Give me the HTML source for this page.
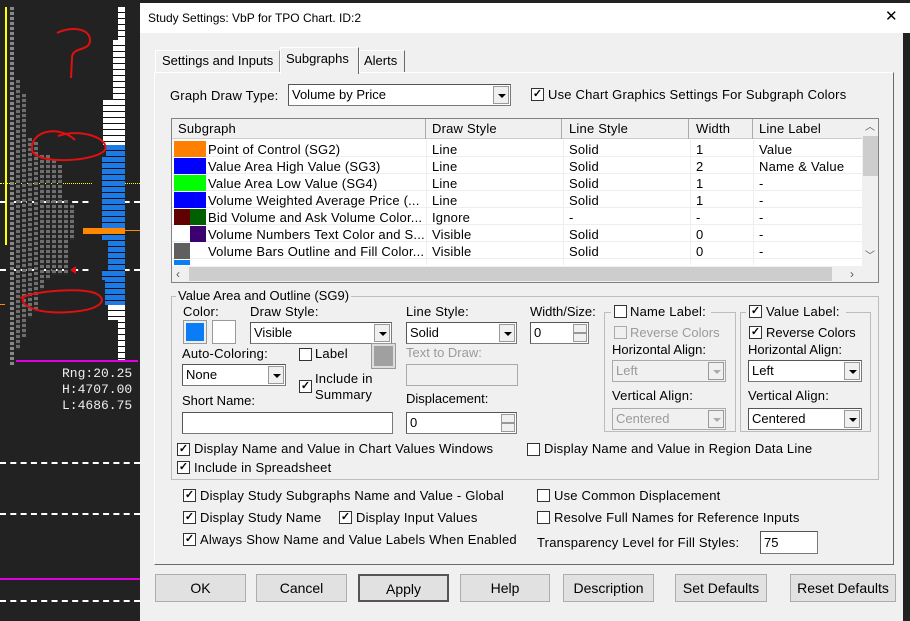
<!DOCTYPE html>
<html><head><meta charset="utf-8"><style>
*{margin:0;padding:0;box-sizing:border-box}
body{width:910px;height:621px;overflow:hidden;background:#222;font-family:"Liberation Sans",Arial,sans-serif;font-size:13px;color:#000;position:relative}
.a{position:absolute}
.t{position:absolute;line-height:16px;white-space:nowrap;font-size:13px;letter-spacing:0.2px}
.dis{color:#9a9a9a}
.cb{position:absolute;width:13px;height:13px;background:#fff;border:1px solid #333;font-size:11px;line-height:11px;text-align:center;font-weight:bold}
.cb.d{border-color:#aaa;background:#f0f0f0}
.sel{position:absolute;background:#fff;border:1px solid #7a7a7a;border-top-color:#555;border-left-color:#555;height:22px;line-height:20px;padding-left:3px;font-size:13px}
.sel .ar{position:absolute;right:1px;top:1px;width:16px;height:18px;background:#f0f0f0;border:1px solid #999}
.sel .ar:after{content:"";position:absolute;left:4px;top:7px;border-left:4px solid transparent;border-right:4px solid transparent;border-top:4px solid #000}
.sel.d{background:#f0f0f0;color:#9a9a9a;border-color:#aaa}
.sel.d .ar:after{border-top-color:#aaa}
.box{position:absolute;background:#fff;border:1px solid #7a7a7a;border-top-color:#555;border-left-color:#555}
.btn{position:absolute;top:574px;height:28px;background:#e1e1e1;border:1px solid #adadad;text-align:center;line-height:26px;font-size:14px}
.grp{position:absolute;border:1px solid #bdbdbd}
.spin{position:absolute;right:1px;width:14px;height:9px;background:#f0f0f0;border:1px solid #999}
.tp{position:absolute;width:4px;background:repeating-linear-gradient(#6e6e6e 0 3px,#2a2a2a 3px 5px)}
</style></head><body>

<!-- chart area -->
<div class="a" style="left:5px;top:7px;width:2px;height:238px;background:#ffff00"></div>
<div class="a" style="left:0;top:183px;width:140px;border-top:1px dotted #ffff00"></div>
<div class="a" style="left:0;top:201px;width:140px;border-top:2px dashed #fff"></div>
<div class="a" style="left:0;top:269px;width:140px;border-top:2px dashed #fff"></div>
<div class="a" style="left:0;top:462px;width:140px;border-top:2px dashed #fff"></div>
<div class="a" style="left:0;top:513px;width:140px;border-top:2px dashed #fff"></div>
<div class="a" style="left:0;top:600px;width:140px;border-top:2px dashed #fff"></div>
<div class="a" style="left:0;top:578px;width:140px;height:2px;background:#e000e0"></div>
<div class="a" style="left:16px;top:360px;width:122px;height:2px;background:#e000e0"></div>
<div class="a" style="left:0;top:304px;width:5px;height:1px;background:#f80"></div>
<div class="a" style="left:125px;top:230px;width:15px;height:1px;background:#f80"></div>
<!-- TPO columns -->
<div class="tp" style="left:10px;top:7px;height:358px;background:repeating-linear-gradient(#888 0 3px,#2a2a2a 3px 5px)"></div>
<div class="tp" style="left:16px;top:80px;height:270px"></div>
<div class="tp" style="left:22px;top:94px;height:243px"></div>
<div class="tp" style="left:28px;top:138px;height:180px"></div>
<div class="tp" style="left:34px;top:142px;height:170px"></div>
<div class="tp" style="left:40px;top:155px;height:135px"></div>
<div class="tp" style="left:46px;top:155px;height:125px"></div>
<div class="tp" style="left:52px;top:160px;height:115px"></div>
<div class="tp" style="left:58px;top:165px;height:110px"></div>
<div class="tp" style="left:64px;top:200px;height:75px"></div>
<div class="tp" style="left:70px;top:205px;height:35px"></div>
<!-- volume bars -->
<div class="a" style="left:92px;top:145px;width:33px;height:160px;background:repeating-linear-gradient(#1e7be6 0 5px,#111 5px 6px)"></div>
<div class="a" style="left:92px;top:145px;width:10px;height:160px;background:#222"></div>
<div class="a" style="left:102px;top:145px;width:4px;height:12px;background:#222"></div>
<div class="a" style="left:102px;top:240px;width:6px;height:30px;background:#222"></div>
<div class="a" style="left:102px;top:280px;width:3px;height:25px;background:#222"></div>
<div class="a" style="left:83px;top:228px;width:42px;height:6px;background:#f80"></div>
<div class="a" style="left:103px;top:40px;width:22px;height:105px;background:repeating-linear-gradient(#fff 0 5px,#111 5px 6px)"></div>
<div class="a" style="left:103px;top:40px;width:10px;height:60px;background:#222"></div>
<div class="a" style="left:118px;top:7px;width:7px;height:33px;background:repeating-linear-gradient(#fff 0 5px,#111 5px 6px)"></div>
<div class="a" style="left:108px;top:305px;width:17px;height:55px;background:repeating-linear-gradient(#fff 0 5px,#111 5px 6px)"></div>
<div class="a" style="left:108px;top:320px;width:10px;height:40px;background:#222"></div>
<div class="a" style="left:62px;top:366px;font:13px 'Liberation Mono',monospace;color:#eee;line-height:16px">Rng:20.25<br>H:4707.00<br>L:4686.75</div>
<svg class="a" style="left:0;top:0" width="140" height="360"><g fill="none" stroke="#e01010" stroke-width="2"><path d="M57 33 C70 26,90 28,90 40 C90 52,72 46,72 58 L71 78"/><path d="M75 140 C60 125,30 130,32 150 C35 165,95 162,105 150 C110 138,80 128,58 136"/><path d="M25 296 C15 305,40 315,70 312 C100 310,110 300,95 293 C80 288,40 290,20 298"/></g><path d="M70 270 l6 -4 v8 z" fill="#e01010"/></svg>

<!-- dialog -->
<div class="a" style="left:140px;top:3px;width:770px;height:618px;background:#f0f0f0"></div>
<div class="a" style="left:140px;top:3px;width:770px;height:30px;background:#fff"></div>
<div class="t" style="left:148px;top:10px;font-size:12px;letter-spacing:0">Study Settings: VbP for TPO Chart. ID:2</div>
<div class="t" style="left:885px;top:9px;font-size:15px">✕</div>
<div class="a" style="left:903px;top:33px;width:7px;height:588px;background:#222"></div>

<!-- tabs -->
<div class="a" style="left:154px;top:72px;width:740px;height:493px;border:1px solid #adadad;border-top-color:#fff;border-left-color:#fff;border-right-color:#696969;border-bottom-color:#696969"></div>
<div class="a" style="left:155px;top:50px;width:125px;height:22px;border:1px solid #fff;border-right-color:#999;border-bottom:none"></div>
<div class="t" style="left:162px;top:53px;letter-spacing:0">Settings and Inputs</div>
<div class="a" style="left:280px;top:47px;width:79px;height:27px;background:#f0f0f0;border:1px solid #fff;border-right-color:#696969;border-bottom:none"></div>
<div class="t" style="left:286px;top:51px;letter-spacing:0">Subgraphs</div>
<div class="a" style="left:359px;top:50px;width:46px;height:22px;border:1px solid #fff;border-right-color:#696969;border-bottom:none"></div>
<div class="t" style="left:364px;top:53px;letter-spacing:0">Alerts</div>

<div class="t" style="left:170px;top:88px">Graph Draw Type:</div>
<div class="sel" style="left:288px;top:84px;width:223px">Volume by Price<div class="ar"></div></div>
<div class="cb" style="left:531px;top:88px">✓</div>
<div class="t" style="left:548px;top:87px">Use Chart Graphics Settings For Subgraph Colors</div>

<!-- table -->
<div class="a" style="left:171px;top:118px;width:708px;height:165px;background:#fff;border:1px solid #828282"></div>
<div class="a" style="left:172px;top:119px;width:690px;height:20px;background:#f0f0f0;border-bottom:1px solid #ccc"></div>
<div class="a" style="left:425px;top:119px;width:1px;height:20px;background:#aaa"></div>
<div class="a" style="left:561px;top:119px;width:1px;height:20px;background:#aaa"></div>
<div class="a" style="left:688px;top:119px;width:1px;height:20px;background:#aaa"></div>
<div class="a" style="left:752px;top:119px;width:1px;height:20px;background:#aaa"></div>
<div class="t" style="left:178px;top:121px">Subgraph</div>
<div class="t" style="left:432px;top:121px">Draw Style</div>
<div class="t" style="left:569px;top:121px">Line Style</div>
<div class="t" style="left:696px;top:121px">Width</div>
<div class="t" style="left:759px;top:121px">Line Label</div>
<div class="a" style="left:172px;top:140px;width:690px;height:125px;background:repeating-linear-gradient(#fff 0 16px,#eee 16px 17px)"></div>
<div class="a" style="left:426px;top:140px;width:1px;height:125px;background:#eee"></div>
<div class="a" style="left:563px;top:140px;width:1px;height:125px;background:#eee"></div>
<div class="a" style="left:690px;top:140px;width:1px;height:125px;background:#eee"></div>
<div class="a" style="left:753px;top:140px;width:1px;height:125px;background:#eee"></div>
<div class="a" style="left:174px;top:141px;width:32px;height:16px;background:#ff8000"></div>
<div class="a" style="left:174px;top:158px;width:32px;height:16px;background:#0000ff"></div>
<div class="a" style="left:174px;top:175px;width:32px;height:16px;background:#00ff00"></div>
<div class="a" style="left:174px;top:192px;width:32px;height:16px;background:#0000ff"></div>
<div class="a" style="left:174px;top:209px;width:16px;height:16px;background:#600000"></div>
<div class="a" style="left:190px;top:209px;width:16px;height:16px;background:#006000"></div>
<div class="a" style="left:190px;top:226px;width:16px;height:16px;background:#3c0070"></div>
<div class="a" style="left:174px;top:243px;width:16px;height:16px;background:#606060"></div>
<div class="a" style="left:174px;top:260px;width:16px;height:5px;background:#0a7cf5"></div>
<div class="t" style="left:208px;top:141px;line-height:17px">Point of Control (SG2)<br>Value Area High Value (SG3)<br>Value Area Low Value (SG4)<br>Volume Weighted Average Price (...<br>Bid Volume and Ask Volume Color...<br>Volume Numbers Text Color and S...<br>Volume Bars Outline and Fill Color...</div>
<div class="t" style="left:432px;top:141px;line-height:17px">Line<br>Line<br>Line<br>Line<br>Ignore<br>Visible<br>Visible</div>
<div class="t" style="left:569px;top:141px;line-height:17px">Solid<br>Solid<br>Solid<br>Solid<br>-<br>Solid<br>Solid</div>
<div class="t" style="left:696px;top:141px;line-height:17px">1<br>2<br>1<br>1<br>-<br>0<br>0</div>
<div class="t" style="left:759px;top:141px;line-height:17px">Value<br>Name &amp; Value<br>-<br>-<br>-<br>-<br>-</div>
<div class="a" style="left:862px;top:119px;width:16px;height:147px;background:#f0f0f0"></div>
<div class="a" style="left:863px;top:136px;width:15px;height:40px;background:#cdcdcd"></div>
<div class="t" style="left:865px;top:120px;font-size:10px;color:#555">︿</div>
<div class="t" style="left:865px;top:249px;font-size:10px;color:#555">﹀</div>
<div class="a" style="left:172px;top:266px;width:706px;height:16px;background:#f0f0f0"></div>
<div class="a" style="left:189px;top:267px;width:643px;height:14px;background:#cdcdcd"></div>
<div class="t" style="left:176px;top:266px;font-size:12px;color:#555">‹</div>
<div class="t" style="left:850px;top:266px;font-size:12px;color:#555">›</div>

<!-- group -->
<div class="grp" style="left:171px;top:296px;width:708px;height:184px"></div>
<div class="t" style="left:176px;top:288px;background:#f0f0f0;padding:0 2px;letter-spacing:0">Value Area and Outline (SG9)</div>
<div class="t" style="left:183px;top:304px">Color:</div>
<div class="a" style="left:183px;top:320px;width:24px;height:24px;border:1px solid #999;background:#0a7cf5;box-shadow:inset 0 0 0 2px #eee"></div>
<div class="a" style="left:212px;top:320px;width:24px;height:24px;border:1px solid #999;background:#fff"></div>
<div class="t" style="left:250px;top:304px">Draw Style:</div>
<div class="sel" style="left:250px;top:322px;width:142px">Visible<div class="ar"></div></div>
<div class="t" style="left:406px;top:304px">Line Style:</div>
<div class="sel" style="left:406px;top:322px;width:111px">Solid<div class="ar"></div></div>
<div class="t" style="left:530px;top:304px;letter-spacing:0">Width/Size:</div>
<div class="box" style="left:530px;top:322px;width:59px;height:22px;padding-left:3px;line-height:20px">0<div class="spin" style="top:1px"></div><div class="spin" style="top:10px"></div></div>

<div class="grp" style="left:604px;top:312px;width:132px;height:120px"></div>
<div class="a" style="left:611px;top:304px;width:100px;height:16px;background:#f0f0f0"></div>
<div class="cb" style="left:614px;top:305px"></div>
<div class="t" style="left:630px;top:304px">Name Label:</div>
<div class="cb d" style="left:614px;top:326px"></div>
<div class="t dis" style="left:630px;top:325px;letter-spacing:0">Reverse Colors</div>
<div class="t" style="left:612px;top:342px;letter-spacing:0">Horizontal Align:</div>
<div class="sel d" style="left:612px;top:360px;width:114px">Left<div class="ar"></div></div>
<div class="t" style="left:612px;top:388px">Vertical Align:</div>
<div class="sel d" style="left:612px;top:408px;width:114px">Centered<div class="ar"></div></div>

<div class="grp" style="left:740px;top:312px;width:131px;height:120px"></div>
<div class="a" style="left:746px;top:304px;width:100px;height:16px;background:#f0f0f0"></div>
<div class="cb" style="left:749px;top:305px">✓</div>
<div class="t" style="left:766px;top:304px">Value Label:</div>
<div class="cb" style="left:749px;top:326px">✓</div>
<div class="t" style="left:766px;top:325px;letter-spacing:0">Reverse Colors</div>
<div class="t" style="left:748px;top:342px;letter-spacing:0">Horizontal Align:</div>
<div class="sel" style="left:748px;top:360px;width:114px">Left<div class="ar"></div></div>
<div class="t" style="left:748px;top:388px">Vertical Align:</div>
<div class="sel" style="left:748px;top:408px;width:114px">Centered<div class="ar"></div></div>

<div class="t" style="left:182px;top:346px">Auto-Coloring:</div>
<div class="sel" style="left:182px;top:364px;width:104px">None<div class="ar"></div></div>
<div class="cb" style="left:299px;top:348px"></div>
<div class="t" style="left:315px;top:346px">Label</div>
<div class="a" style="left:372px;top:344px;width:23px;height:24px;background:#a0a0a0;border:2px solid #ddd;outline:1px solid #999"></div>
<div class="cb" style="left:299px;top:380px">✓</div>
<div class="t" style="left:315px;top:371px">Include in</div>
<div class="t" style="left:315px;top:387px">Summary</div>
<div class="t dis" style="left:406px;top:345px;letter-spacing:0">Text to Draw:</div>
<div class="a" style="left:406px;top:364px;width:112px;height:22px;border:1px solid #aaa;background:#f0f0f0"></div>
<div class="t" style="left:182px;top:393px;letter-spacing:0">Short Name:</div>
<div class="box" style="left:182px;top:412px;width:211px;height:22px"></div>
<div class="t" style="left:406px;top:391px;letter-spacing:0">Displacement:</div>
<div class="box" style="left:406px;top:412px;width:111px;height:22px;padding-left:3px;line-height:20px">0<div class="spin" style="top:1px"></div><div class="spin" style="top:10px"></div></div>

<div class="cb" style="left:177px;top:443px">✓</div>
<div class="t" style="left:194px;top:441px">Display Name and Value in Chart Values Windows</div>
<div class="cb" style="left:527px;top:443px"></div>
<div class="t" style="left:544px;top:441px">Display Name and Value in Region Data Line</div>
<div class="cb" style="left:177px;top:461px">✓</div>
<div class="t" style="left:194px;top:460px">Include in Spreadsheet</div>

<div class="cb" style="left:183px;top:489px">✓</div>
<div class="t" style="left:200px;top:488px">Display Study Subgraphs Name and Value - Global</div>
<div class="cb" style="left:537px;top:489px"></div>
<div class="t" style="left:554px;top:488px">Use Common Displacement</div>
<div class="cb" style="left:183px;top:511px">✓</div>
<div class="t" style="left:200px;top:510px">Display Study Name</div>
<div class="cb" style="left:339px;top:511px">✓</div>
<div class="t" style="left:356px;top:510px">Display Input Values</div>
<div class="cb" style="left:537px;top:511px"></div>
<div class="t" style="left:554px;top:510px">Resolve Full Names for Reference Inputs</div>
<div class="cb" style="left:183px;top:533px">✓</div>
<div class="t" style="left:200px;top:532px">Always Show Name and Value Labels When Enabled</div>
<div class="t" style="left:537px;top:535px">Transparency Level for Fill Styles:</div>
<div class="box" style="left:760px;top:531px;width:58px;height:23px;padding-left:3px;line-height:21px">75</div>

<div class="btn" style="left:155px;width:91px">OK</div>
<div class="btn" style="left:256px;width:91px">Cancel</div>
<div class="btn" style="left:358px;width:91px;border:2px solid #555">Apply</div>
<div class="btn" style="left:460px;width:90px">Help</div>
<div class="btn" style="left:563px;width:91px">Description</div>
<div class="btn" style="left:675px;width:92px">Set Defaults</div>
<div class="btn" style="left:790px;width:106px">Reset Defaults</div>
</body></html>
